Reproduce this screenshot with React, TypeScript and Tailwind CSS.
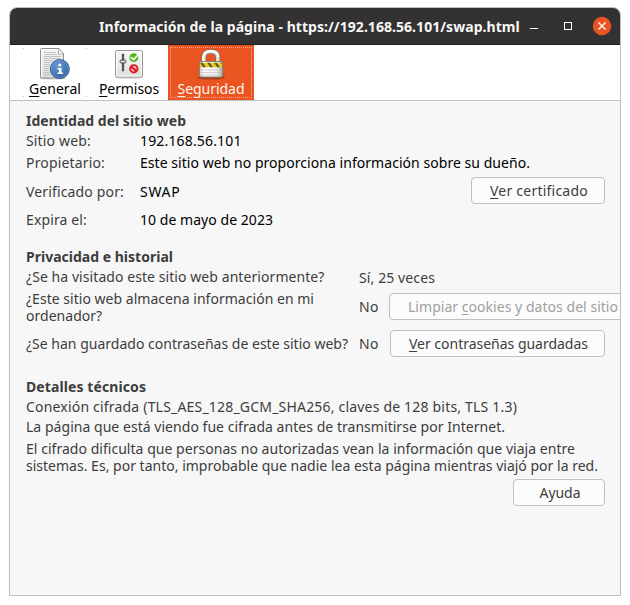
import React from "react";

type TextProps = { children: React.ReactNode; className?: string };

function Label({ children, className = "" }: TextProps) {
  return <span className={`block shrink-0 whitespace-nowrap ${className}`}>{children}</span>;
}

function Key({ children }: { children: string }) {
  return <span className="underline decoration-1 underline-offset-2 [text-decoration-skip-ink:none]">{children}</span>;
}

function Button({ children, className = "" }: TextProps) {
  return (
    <button
      className={`flex h-[27px] shrink-0 items-center justify-center whitespace-nowrap rounded-[4px] border border-[#c0c0c0] bg-[#fcfcfc] ${className}`}
    >
      {children}
    </button>
  );
}

function GeneralIcon() {
  return (
    <svg width="32" height="32" viewBox="0 0 32 32">
      <defs>
        <linearGradient id="paper" x1="0" y1="0" x2="0" y2="1">
          <stop offset="0" stopColor="#f6f6f4" />
          <stop offset="1" stopColor="#dcdcda" />
        </linearGradient>
        <radialGradient id="info" cx="0.4" cy="0.3" r="0.75">
          <stop offset="0" stopColor="#6c9bd0" />
          <stop offset="1" stopColor="#2f62a4" />
        </radialGradient>
      </defs>
      <ellipse cx="14" cy="30.3" rx="13.5" ry="1.3" fill="#000" opacity="0.18" />
      <path d="M1.5 1.5q0-1 1-1H20l4.500 5.500V29q0 1-1 1H2.500q-1 0-1-1Z" fill="url(#paper)" stroke="#8d8f8c" />
      <path d="M2.500 1.500H19.500M2.500 1.500V29" stroke="#fff" />
      <path d="M19.500 .5 19.500 6.500 24.500 6Z" fill="#fff" stroke="#929490" strokeWidth=".7" />
      <path
        d="M5 4.500h12M5 6.500h13M5 8.500h17M5 10.500h16M5 12.500h9M5 14.500h7M5 16.500h6M5 18.500h5M5 20.500h5M5 22.500h5M5 24.500h6M5 26.500h7"
        stroke="#c3c4c1"
        strokeWidth="1"
      />
      <circle cx="20.800" cy="21" r="9.500" fill="url(#info)" stroke="#2f5f9f" />
      <circle cx="20.800" cy="21" r="8.500" fill="none" stroke="#82abd8" strokeWidth=".7" opacity=".7" />
      <circle cx="20.800" cy="17" r="1.500" fill="#fff" />
      <path d="M18.500 20h4v4.500H24V26h-5.500v-1.500H20v-3h-1.500Z" fill="#fff" />
    </svg>
  );
}

function PermissionsIcon() {
  return (
    <svg width="32" height="32" viewBox="0 0 32 32">
      <defs>
        <linearGradient id="panel" x1="0" y1="0" x2="0" y2="1">
          <stop offset="0" stopColor="#f8f8f7" />
          <stop offset="1" stopColor="#dededc" />
        </linearGradient>
      </defs>
      <ellipse cx="16" cy="29.500" rx="14" ry="1.300" fill="#000" opacity="0.18" />
      <rect x="2.500" y="2.500" width="27" height="26.500" rx="2" fill="url(#panel)" stroke="#93958f" />
      <rect x="3.500" y="3.500" width="25" height="24.500" rx="1.200" fill="none" stroke="#fff" />
      <path d="M8.700 5.500h2.600v18H8.700z" fill="#a0a29e" />
      <path d="M10 6v17" stroke="#30343a" strokeWidth="1.400" />
      <rect x="7" y="12" width="6" height="3" rx="1.500" fill="#d7dad8" stroke="#3b4144" />
      <circle cx="20.800" cy="9.700" r="4.400" fill="#4fb817" />
      <path d="m17.800 9 2.700 2.500 5-5" fill="none" stroke="#fff" strokeWidth="1.700" />
      <circle cx="20.800" cy="20.800" r="3.700" fill="#f8c9c9" stroke="#dc1823" strokeWidth="1.900" />
      <path d="m18.200 18.700 5.200 4.200" stroke="#dc1823" strokeWidth="2" />
    </svg>
  );
}

function LockIcon() {
  return (
    <svg width="32" height="32" viewBox="0 0 32 32">
      <defs>
        <linearGradient id="lock" x1="0" y1="0" x2="1" y2="0">
          <stop offset="0" stopColor="#c9cac6" />
          <stop offset=".2" stopColor="#fff" />
          <stop offset=".75" stopColor="#f0f0ee" />
          <stop offset="1" stopColor="#a5a6a2" />
        </linearGradient>
        <clipPath id="band">
          <path d="M5 14.500h22v5H5z" />
        </clipPath>
      </defs>
      <ellipse cx="16" cy="29.500" rx="14" ry="2" fill="#6b260d" opacity="0.5" />
      <path d="M8.800 15V9.500Q8.800 3.500 15.800 3.500T22.800 9.500V15" fill="none" stroke="#85665a" strokeWidth="4.800" />
      <path d="M8.800 15V9.500Q8.800 3.500 15.800 3.500T22.800 9.500V15" fill="none" stroke="#deded9" strokeWidth="3.600" />
      <path d="M8.300 14V9.500Q8.300 3 15.800 3t7.500 6" fill="none" stroke="#fff" strokeWidth="1.800" />
      <rect x="4.500" y="13.500" width="23" height="15.500" rx="1.500" fill="url(#lock)" stroke="#858580" />
      <g clipPath="url(#band)">
        <path d="M4 14.500h24v5H4z" fill="#e6c929" />
        <path d="m5 14.500 2.500 0 3.500 5H8.500ZM12 14.500h2.500l3.500 5h-2.500ZM19 14.500h2.500l3.500 5h-2.500ZM25.500 14.500H28v3Z" fill="#5c501e" />
      </g>
      <path d="M5.500 22h21M5.500 24.500h21M5.500 27h21" stroke="#c4c5c1" strokeWidth=".8" />
    </svg>
  );
}

export default function App() {
  return (
    <div className="h-[605px] w-[630px] overflow-hidden bg-white pl-[9px] pt-[7px] font-['Noto_Sans',sans-serif] text-[14px] leading-[17px] text-[#3d3d3d]">
      <div className="flex h-[589px] w-[612px] flex-col overflow-hidden rounded-t-[8px] border border-[#bfbfbf] bg-[#f7f7f7]">
        <header className="flex h-[37px] shrink-0 items-center border-b border-[#1f1d1d] bg-[#333132] text-white">
          <Label className="ml-[89px] w-[431px] font-bold tracking-[0.045px] text-[#f7f7f7]">
            Información de la página - https://192.168.56.101/swap.html
          </Label>
          <svg width="84" height="36" viewBox="0 0 84 36" className="shrink-0">
            <path d="M0 20.500h8" stroke="#fff" />
            <rect x="34.500" y="14.500" width="7" height="7" fill="none" stroke="#fff" />
            <circle cx="72" cy="18" r="9.200" fill="#e95420" />
            <path d="m68.500 14.500 7 7m0-7-7 7" stroke="#fff" strokeWidth="1.300" />
          </svg>
        </header>

        <nav className="flex h-[56px] shrink-0 border-b border-[#c0c0c0] bg-white pl-[6px] text-black">
          <div className="relative flex w-[78px] flex-col items-center pt-[3px]">
            <GeneralIcon />
            <Label className="tracking-[0.05px]"><Key>G</Key>eneral</Label>
            <i className="absolute left-[7px] top-[3px] size-px bg-[#f5b39b]" />
            <i className="absolute left-[70px] top-[3px] size-px bg-[#f5b39b]" />
            <i className="absolute left-[7px] top-[51px] size-px bg-[#f5b39b]" />
            <i className="absolute left-[70px] top-[51px] size-px bg-[#f5b39b]" />
          </div>
          <div className="mr-[4px] flex w-[70px] flex-col items-center pt-[3px]">
            <PermissionsIcon />
            <Label className="tracking-[-0.08px]"><Key>P</Key>ermisos</Label>
          </div>
          <div className="flex w-[86px] bg-[#e95420] p-[2px] text-[#fff3ee]">
            <div className="flex w-full flex-col items-center border border-dotted border-[#f4ad93]">
              <LockIcon />
              <Label className="tracking-[-0.035px]"><Key>S</Key>eguridad</Label>
            </div>
          </div>
        </nav>

        <main className="flex flex-col pl-[16px] pt-[11px]">
          <h2 className="font-bold tracking-[0.008px]">Identidad del sitio web</h2>
          <div className="mt-[3px] flex">
            <Label className="w-[114px] tracking-[0.16px]">Sitio web:</Label>
            <Label className="tracking-[0.16px] text-black">192.168.56.101</Label>
          </div>
          <div className="mt-[5px] flex">
            <Label className="w-[114px] tracking-[0.16px]">Propietario:</Label>
            <Label className="tracking-[0.045px] text-black">Este sitio web no proporciona información sobre su dueño.</Label>
          </div>
          <div className="mt-[6px] flex items-center">
            <Label className="w-[114px] pt-[2px] tracking-[0.15px]">Verificado por:</Label>
            <Label className="w-[331px] pt-[2px] tracking-[0.7px] text-black">SWAP</Label>
            <Button className="w-[134px] pl-[2px] tracking-[0.227px]"><span><Key>V</Key>er certificado</span></Button>
          </div>
          <div className="mt-[7px] flex">
            <Label className="w-[114px] tracking-[0.13px]">Expira el:</Label>
            <Label className="tracking-[0.045px] text-black">10 de mayo de 2023</Label>
          </div>

          <h2 className="mt-[20px] font-bold tracking-[0.009px]">Privacidad e historial</h2>
          <div className="mt-[3px] flex h-[17px] items-start">
            <Label className="w-[333px] tracking-[0.07px]">¿Se ha visitado este sitio web anteriormente?</Label>
            <Label className="pt-[1px] tracking-[0.109px]">Sí, 25 veces</Label>
          </div>
          <div className="mt-[5px] flex items-start">
            <Label className="w-[333px] tracking-[0.028px]">
              ¿Este sitio web almacena información en mi
              <br />
              ordenador?
            </Label>
            <Label className="w-[30px] pt-[8px] tracking-[0.3px]">No</Label>
            <Button className="mt-[3px] w-[248px] tracking-[0.035px] text-[#a0a0a0]"><span>Limpiar <Key>c</Key>ookies y datos del sitio</span></Button>
          </div>
          <div className="mt-[6px] flex items-center">
            <Label className="w-[333px] tracking-[0.008px]">¿Se han guardado contraseñas de este sitio web?</Label>
            <Label className="w-[31px] tracking-[0.3px]">No</Label>
            <Button className="w-[215px] pl-[2px] tracking-[-0.016px]"><span><Key>V</Key>er contraseñas guardadas</span></Button>
          </div>

          <h2 className="mt-[21px] font-bold tracking-[0.095px]">Detalles técnicos</h2>
          <Label className="mt-[3px] tracking-[0.192px]">Conexión cifrada (TLS_AES_128_GCM_SHA256, claves de 128 bits, TLS 1.3)</Label>
          <Label className="mt-[3px] tracking-[0.037px]">La página que está viendo fue cifrada antes de transmitirse por Internet.</Label>
          <Label className="mt-[5px] tracking-[0.034px]">El cifrado dificulta que personas no autorizadas vean la información que viaja entre</Label>
          <Label className="tracking-[0.01px]">sistemas. Es, por tanto, improbable que nadie lea esta página mientras viajó por la red.</Label>
          <Button className="ml-[487px] mt-[5px] w-[92px] pl-[2px] tracking-[-0.041px]">Ayuda</Button>
        </main>
      </div>
    </div>
  );
}
